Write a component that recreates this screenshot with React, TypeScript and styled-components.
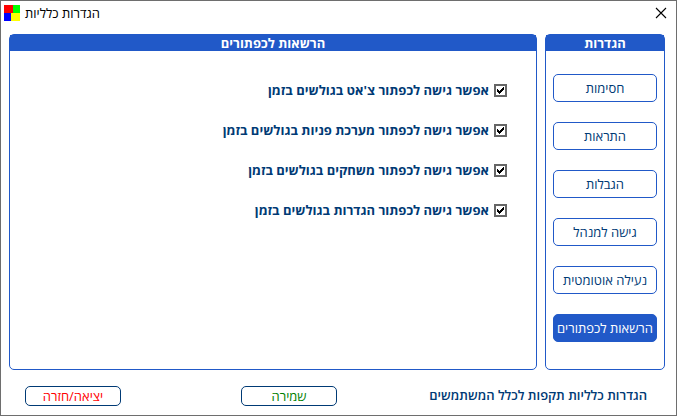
import React, { useState } from "react";
import styled, { createGlobalStyle } from "styled-components";

const BLUE = "#2159c8";
const NAVY = "#003a75";

const GlobalStyle = createGlobalStyle`
  * { box-sizing: border-box; }
  body { margin: 0; background: #fff; }
`;

const Window = styled.div`
  display: flex;
  flex-direction: column;
  min-height: 100vh;
  border: 1px solid #6e6e6e;
  background: #fff;
  color: ${NAVY};
  font-family: "Open Sans", "DejaVu Sans", sans-serif;
  font-size: 13px;
  line-height: 16px;
`;

const TitleBar = styled.header`
  display: flex;
  align-items: center;
  gap: 5px;
  height: 24px;
  padding: 0 9px 0 3px;
`;

const Title = styled.h1`
  flex: 1;
  margin: 0;
  color: #000;
  font-size: 13px;
  font-weight: 400;
`;

const CloseButton = styled.button`
  display: flex;
  padding: 0;
  border: 0;
  background: none;
`;

const Content = styled.main`
  display: flex;
  flex: 1;
  gap: 8px;
  padding: 9px 11px 0 8px;
`;

const Panel = styled.section<{ $narrow?: boolean }>`
  flex: ${(p) => (p.$narrow ? "0 0 120px" : "1")};
  border: 1px solid ${BLUE};
  border-radius: 5px;
`;

const PanelTitle = styled.h2`
  margin: 0;
  height: 16px;
  background: ${BLUE};
  color: #fff;
  font-size: 13px;
  font-weight: 700;
  line-height: 16px;
  text-align: center;
`;

const Nav = styled.nav`
  display: flex;
  flex-direction: column;
  gap: 20px;
  padding: 23px 7px 27px;
`;

const NavButton = styled.button<{ $active: boolean }>`
  height: 28px;
  padding: 0;
  border: 1px solid ${BLUE};
  border-radius: 5px;
  background: ${(p) => (p.$active ? BLUE : "#fff")};
  color: ${(p) => (p.$active ? "#fff" : NAVY)};
  font: inherit;
  white-space: nowrap;
`;

const Options = styled.div`
  display: flex;
  flex-direction: column;
  gap: 24px;
  padding: 31px 29px;
`;

const Option = styled.label`
  display: flex;
  align-items: center;
  gap: 5px;
  font-weight: 700;
`;

const CheckBox = styled.span`
  display: grid;
  width: 13px;
  height: 13px;

  > * { grid-area: 1 / 1; }
  input {
    appearance: none;
    width: 13px;
    height: 13px;
    margin: 0;
    border: 2px solid #666;
    background: #fff;
  }
  svg { z-index: 1; pointer-events: none; visibility: hidden; }
  input:checked + svg { visibility: visible; }
`;

const Footer = styled.footer`
  display: flex;
  align-items: center;
  height: 45px;
  padding: 6px 29px 0 24px;
`;

const Note = styled.p`
  flex: 1;
  margin: 0;
  padding-bottom: 2px;
  font-weight: 600;
`;

const Actions = styled.div`
  display: flex;
  gap: 120px;
`;

const ActionButton = styled.button<{ $color: string }>`
  width: 96px;
  height: 20px;
  padding: 0;
  border: 1px solid ${NAVY};
  border-radius: 5px;
  background: #fff;
  color: ${(p) => p.$color};
  font: inherit;
`;

const sections = ["חסימות", "התראות", "הגבלות", "גישה למנהל", "נעילה אוטומטית", "הרשאות לכפתורים"];

const permissions = [
  "אפשר גישה לכפתור צ'אט בגולשים בזמן",
  "אפשר גישה לכפתור מערכת פניות בגולשים בזמן",
  "אפשר גישה לכפתור משחקים בגולשים בזמן",
  "אפשר גישה לכפתור הגדרות בגולשים בזמן",
];

function AppIcon() {
  return (
    <svg width="16" height="16" shapeRendering="crispEdges" aria-hidden="true">
      <path fill="#f00" d="M0 0h9v8H0z" />
      <path fill="#0f0" d="M9 0h7v8H9z" />
      <path fill="#00f" d="M0 8h7v8H0z" />
      <path fill="#ff0" d="M7 8h9v8H7z" />
    </svg>
  );
}

export default function App() {
  const [active, setActive] = useState(5);
  return (
    <>
      <GlobalStyle />
      <Window>
        <TitleBar>
          <AppIcon />
          <Title>הגדרות כלליות</Title>
          <CloseButton aria-label="סגירה">
            <svg width="12" height="12" stroke="#000" strokeWidth="1.1" aria-hidden="true">
              <path d="M1 1l10 10M11 1L1 11" />
            </svg>
          </CloseButton>
        </TitleBar>
        <Content dir="rtl">
          <Panel $narrow>
            <PanelTitle>הגדרות</PanelTitle>
            <Nav>
              {sections.map((name, i) => (
                <NavButton key={name} $active={i === active} onClick={() => setActive(i)}>
                  {name}
                </NavButton>
              ))}
            </Nav>
          </Panel>
          <Panel>
            <PanelTitle>הרשאות לכפתורים</PanelTitle>
            <Options>
              {permissions.map((text) => (
                <Option key={text}>
                  <CheckBox>
                    <input type="checkbox" defaultChecked />
                    <svg width="13" height="13" shapeRendering="crispEdges" aria-hidden="true">
                      <path d="M3 5h1v1h1v1h1v-1h1v-1h1v-1h1v-1h1v3h-1v1h-1v1h-1v1h-1v1h-1v-1h-1v-1h-1z" />
                    </svg>
                  </CheckBox>
                  {text}
                </Option>
              ))}
            </Options>
          </Panel>
        </Content>
        <Footer dir="rtl">
          <Note>הגדרות כלליות תקפות לכלל המשתמשים</Note>
          <Actions>
            <ActionButton $color="#008000">שמירה</ActionButton>
            <ActionButton $color="#f00">יציאה/חזרה</ActionButton>
          </Actions>
        </Footer>
      </Window>
    </>
  );
}
